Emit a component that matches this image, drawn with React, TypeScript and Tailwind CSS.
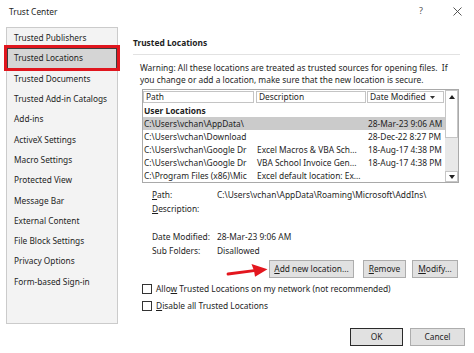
import React from "react";

const navItems = [
  "Trusted Publishers",
  "Trusted Locations",
  "Trusted Documents",
  "Trusted Add-in Catalogs",
  "Add-ins",
  "ActiveX Settings",
  "Macro Settings",
  "Protected View",
  "Message Bar",
  "External Content",
  "File Block Settings",
  "Privacy Options",
  "Form-based Sign-in",
];

const rows = [
  { path: "C:\\Users\\vchan\\AppData\\", desc: "", date: "28-Mar-23 9:06 AM", sel: true },
  { path: "C:\\Users\\vchan\\Download", desc: "", date: "28-Dec-22 8:27 PM" },
  { path: "C:\\Users\\vchan\\Google Dr", desc: "Excel Macros & VBA Sch...", date: "18-Aug-17 4:38 PM" },
  { path: "C:\\Users\\vchan\\Google Dr", desc: "VBA School Invoice Gen...", date: "18-Aug-17 4:38 PM" },
  { path: "C:\\Program Files (x86)\\Mic", desc: "Excel default location: Ex...", date: "" },
];

function Btn({ children, w }: { children: React.ReactNode; w: string }) {
  return (
    <div
      className={`${w} h-[18px] flex items-center justify-center bg-[#e1e1e1] border border-[#adadad]`}
    >
      {children}
    </div>
  );
}

export default function App() {
  return (
    <div className="relative w-[474px] h-[353px] overflow-hidden bg-white text-[#1e1e1e] font-['Noto_Sans',sans-serif] text-[8.4px] leading-[12px] flex flex-col">
      {/* title bar */}
      <div className="h-[27px] flex items-start">
        <div className="pl-[9px] pt-[6px]">Trust Center</div>
        <div className="flex-1" />
        <div className="pt-[5px] w-[10px] text-[#555] text-[9px]">?</div>
        <div className="ml-[24px] mr-[12px] pt-[7px]">
          <svg width="9" height="9" viewBox="0 0 9 9">
            <path d="M0.5 0.5 L8.5 8.5 M8.5 0.5 L0.5 8.5" stroke="#444" strokeWidth="0.9" />
          </svg>
        </div>
      </div>

      <div className="flex">
        {/* left nav */}
        <div className="ml-[6px] w-[112px] h-[297px] border border-[#cbcbcb] bg-[#f3f3f3] flex flex-col text-[8.3px]">
          {navItems.map((t) =>
            t === "Trusted Locations" ? (
              <div
                key={t}
                className="relative h-[20.3px] flex items-center pl-[6px] bg-[#d5d5d5] border border-[#3c3c3c]"
              >
                {t}
                <div className="absolute -left-[4px] -right-[4px] -top-[4px] -bottom-[3px] border-[3px] border-[#e0161e]" />
              </div>
            ) : (
              <div key={t} className="h-[20.3px] flex items-center pl-[7px]">
                {t}
              </div>
            )
          )}
        </div>

        {/* right content */}
        <div className="ml-[15px] w-[333px] flex flex-col">
          <div className="mt-[10px] font-bold">Trusted Locations</div>
          <div className="mt-[5px] w-[327px] h-px bg-[#e2e2e2]" />
          <div className="mt-[7px] pl-[7px] whitespace-nowrap">
            Warning: All these locations are treated as trusted sources for opening files.{"\u00a0 "}If
            <br />
            you change or add a location, make sure that the new location is secure.
          </div>

          {/* table */}
          <div className="mt-[3px] ml-[9px] w-[317px] h-[94px] border border-[#a9a9a9] flex">
            <div className="w-[302px] flex flex-col bg-white">
              <div className="h-[14px] flex items-stretch py-[1px]">
                <div className="w-[111px] border border-[#c4c4c4] flex items-center pl-[2px]">Path</div>
                <div className="ml-[2px] w-[110px] border border-[#c4c4c4] flex items-center pl-[2px]">
                  Description
                </div>
                <div className="ml-[1px] w-[77px] border border-[#c4c4c4] flex items-center pl-[2px]">
                  Date Modified
                  <svg className="ml-[4px]" width="5" height="3" viewBox="0 0 5 3">
                    <path d="M0 0 H5 L2.5 3 Z" fill="#333" />
                  </svg>
                </div>
              </div>
              <div className="h-[13px] flex items-center pl-[1px] font-bold">User Locations</div>
              {rows.map((r, i) => (
                <div
                  key={i}
                  className={`h-[13px] flex items-center whitespace-nowrap ${r.sel ? "bg-[#cbcbcb]" : ""}`}
                >
                  <div className="w-[113px] overflow-hidden pl-[1px]">{r.path}</div>
                  <div className="w-[111px] overflow-hidden pl-[1px]">{r.desc}</div>
                  <div className="w-[78px] overflow-hidden pl-[1px]">{r.date}</div>
                </div>
              ))}
            </div>
            {/* scrollbar */}
            <div className="w-[13px] flex flex-col bg-[#e8e8e8]">
              <div className="h-[12px] bg-white flex items-center justify-center border-x border-t border-[#c6c6c6]">
                <svg width="6" height="4" viewBox="0 0 6 4">
                  <path d="M0 4 H6 L3 0 Z" fill="#222" />
                </svg>
              </div>
              <div className="h-[36px] bg-white border-x border-b border-[#c6c6c6]" />
              <div className="flex-1" />
              <div className="h-[11px] bg-white flex items-center justify-center border border-[#c6c6c6]">
                <svg width="6" height="4" viewBox="0 0 6 4">
                  <path d="M0 0 H6 L3 4 Z" fill="#222" />
                </svg>
              </div>
            </div>
          </div>

          {/* details */}
          <div className="mt-[5px] ml-[19px] flex flex-col leading-[14px]">
            <div className="flex">
              <div className="w-[65px]">
                <span className="underline">P</span>ath:
              </div>
              <div>C:\Users\vchan\AppData\Roaming\Microsoft\AddIns\</div>
            </div>
            <div className="flex">
              <div className="w-[65px]">
                <span className="underline">D</span>escription:
              </div>
            </div>
            <div className="h-[14px]" />
            <div className="flex">
              <div className="w-[65px]">Date Modified:</div>
              <div>28-Mar-23 9:06 AM</div>
            </div>
            <div className="flex">
              <div className="w-[65px]">Sub Folders:</div>
              <div>Disallowed</div>
            </div>
          </div>

          {/* buttons */}
          <div className="mt-[2px] ml-[136px] flex">
            <Btn w="w-[85px]">
              <span>
                <span className="underline">A</span>dd new location...
              </span>
            </Btn>
            <div className="w-[9px]" />
            <Btn w="w-[43px]">
              <span>
                <span className="underline">R</span>emove
              </span>
            </Btn>
            <div className="w-[6px]" />
            <Btn w="w-[46px]">
              <span>
                <span className="underline">M</span>odify...
              </span>
            </Btn>
          </div>

          {/* checkboxes */}
          <div className="mt-[2px] ml-[9px] h-[17px] flex items-center">
            <div className="w-[10px] h-[10px] border border-[#333] bg-white" />
            <div className="ml-[4px]">
              Allo<span className="underline">w</span> Trusted Locations on my network (not recommended)
            </div>
          </div>
          <div className="ml-[9px] h-[17px] flex items-center">
            <div className="w-[10px] h-[10px] border border-[#333] bg-white" />
            <div className="ml-[4px]">
              <span className="underline">D</span>isable all Trusted Locations
            </div>
          </div>

          {/* OK / Cancel */}
          <div className="mt-[14px] ml-[217px] flex">
            <div className="w-[53px] h-[18px] flex items-center justify-center bg-[#e1e1e1] border-[1.5px] border-[#2a2a2a]">
              OK
            </div>
            <div className="w-[7px]" />
            <Btn w="w-[55px]">Cancel</Btn>
          </div>
        </div>
      </div>

      {/* red arrow */}
      <svg
        className="absolute left-[224px] top-[260px]"
        width="46"
        height="20"
        viewBox="0 0 46 20"
      >
        <path d="M4 14 L30 10.6" stroke="#e3161e" strokeWidth="2.8" strokeLinecap="round" />
        <path d="M43.5 9.3 L27.5 4 L30 10.8 L31 16.8 Z" fill="#e3161e" />
      </svg>
    </div>
  );
}
